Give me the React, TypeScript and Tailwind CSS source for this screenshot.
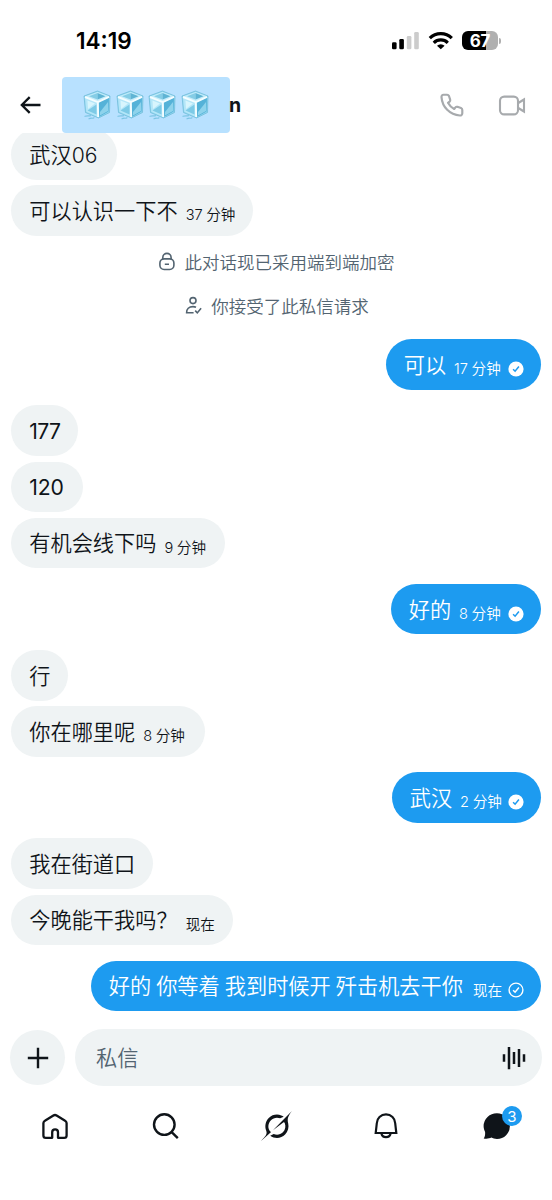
import { ReactNode } from "react";
import clsx from "clsx";

type Status = "sent" | "sending";

interface MessageProps {
  text: string;
  time?: string;
  status?: Status;
  className?: string;
}

function IceCube() {
  return (
    <svg className="h-[31px] w-[28px]" viewBox="0 0 28 31" fill="none" aria-hidden="true">
      <path d="M1 6 L14.5 1 L27 6 L26.5 22.5 L15.5 28 L2.5 22.5 Z" fill="#8fd5ef" stroke="#6bb9d6" strokeWidth=".7" strokeLinejoin="round" />
      <path d="M2 6.5 L14.5 2 L26 6.3 L14.5 11.5 Z" fill="#c4ecfa" />
      <path d="M6 6.2 L14.5 3 L14.5 9.6 Z" fill="#85cde6" />
      <path d="M14.5 3 L22.5 6.3 L14.5 9.6 Z" fill="#5fb4d4" />
      <path d="M2 7.5 L14.5 12 L15 27 L3.3 21.8 Z" fill="#b4e6f8" />
      <path d="M4.5 10.5 L12 13.5 L5 19 Z" fill="#d8f5fd" />
      <path d="M4.5 20.5 L13.5 14.5 V24.5 Z" fill="#7dcae6" />
      <path d="M16 12 L26 7.5 L25.5 21.5 L16 27 Z" fill="#55b2d8" />
      <path d="M17 22 L25 12 V21 L17 25.5 Z" fill="#8ed3ec" />
      <path d="M2 7 L14.8 12.2 L26 6.9 M14.8 12.2 L15.2 27" stroke="#f4fdff" strokeWidth="1.9" strokeLinejoin="round" />
      <path d="M2 26.3 C4 25.4 6 26.2 7.5 25.6 M6 28.8 C8 27.6 9.5 28.8 11 27.8" stroke="#7cc5e4" strokeWidth="1.2" strokeLinecap="round" />
    </svg>
  );
}

function StatusBar() {
  return (
    <div className="flex h-[77px] shrink-0 items-start justify-between pl-[76px] pr-[51px]">
      <span className="mt-[25px] font-['Inter'] text-[22.6px] font-semibold leading-8 text-black">14:19</span>
      <div className="mt-[31px] flex items-start">
        <svg className="h-[19px] w-[28px]" viewBox="0 0 28 19" aria-hidden="true">
          <rect x="0" y="11.3" width="4.6" height="6.9" rx="1.3" fill="#000" />
          <rect x="7.3" y="8" width="4.6" height="10.2" rx="1.3" fill="#000" />
          <rect x="14.8" y="5" width="4.6" height="13.2" rx="1.3" fill="#ccc" />
          <rect x="22.2" y="1" width="4.6" height="17.2" rx="1.3" fill="#ccc" />
        </svg>
        <svg className="ml-[8px] h-[19px] w-[26px]" viewBox="0 0 26 19" fill="none" stroke="#000" strokeWidth="3.2" aria-hidden="true">
          <path d="M1.8 7.2 A15.6 15.6 0 0 1 23.8 7.2" />
          <path d="M5.8 11.8 A10 10 0 0 1 19.8 11.8" />
          <path d="M12.8 18.3 L9 14.8 A5.4 5.4 0 0 1 16.6 14.8 Z" fill="#000" stroke="none" />
        </svg>
        <div className="ml-[8px] flex items-center">
          <div className="flex h-[19px] w-[36px] items-center justify-center rounded-[6px] bg-[linear-gradient(90deg,#000_67%,#b0b0b0_67%)] pt-px font-['Inter'] text-[17px] font-bold leading-none tracking-[-0.3px] text-white">
            67
          </div>
          <div className="ml-px h-[6px] w-[2px] rounded-r-full bg-[#b0b0b0]" />
        </div>
      </div>
    </div>
  );
}

function Header() {
  return (
    <header className="flex h-14 shrink-0 items-center pr-[26px]">
      <svg className="ml-[16px] h-[28px] w-[28px]" viewBox="0 0 24 24" fill="#0f1419" aria-hidden="true">
        <path d="M7.414 13l5.043 5.04-1.414 1.42L3.586 12l7.457-7.46 1.414 1.42L7.414 11H21v2H7.414z" />
      </svg>
      <div className="ml-[18px] flex h-[56px] w-[168px] items-center justify-center gap-[4.7px] rounded-[4px] bg-[#b8e1ff]">
        <IceCube />
        <IceCube />
        <IceCube />
        <IceCube />
      </div>
      <span className="-ml-px mt-px font-['Inter'] text-[19.5px] font-bold text-[#0f1419]">n</span>
      <svg className="ml-auto h-[26px] w-[26px]" viewBox="0 0 24 24" fill="none" stroke="#a7aaad" strokeWidth="2" strokeLinejoin="round" aria-hidden="true">
        <path d="M7.5 2.5 H4.2 C3 2.5 2.2 3.5 2.3 4.7 C3 14 10 21 19.3 21.7 c1.2 .1 2.2-.8 2.2-2 v-3.2 c0-.8-.5-1.4-1.2-1.7 l-3.3-1.1 c-.7-.2-1.4 0-1.8.5 l-1.2 1.5 C11.5 14.4 9.6 12.5 8.3 10 L9.8 8.8 c.5-.4.7-1.1.5-1.8 L9.2 3.7 C8.9 3 8.3 2.5 7.5 2.5z" />
      </svg>
      <svg className="ml-[33px] h-[23px] w-[28px]" viewBox="0 0 28 23" fill="none" stroke="#a7aaad" strokeWidth="2.1" aria-hidden="true">
        <rect x="2" y="2.6" width="18" height="17.8" rx="4.2" />
        <path d="M20.3 9 L26 5.5 V17.5 L20.3 14" />
      </svg>
    </header>
  );
}

function Check({ status }: { status: Status }) {
  return (
    <svg className="mt-[9px] mr-[16.5px] ml-auto h-4 w-4 shrink-0" viewBox="0 0 16 16" fill="none" aria-hidden="true">
      {status === "sent" ? (
        <circle cx="8" cy="8" r="7.6" fill="#fff" />
      ) : (
        <circle cx="8" cy="8" r="6.9" stroke="#fff" strokeWidth="1.4" />
      )}
      <path d="M5.1 8.2 L7.1 10.2 L10.9 5.6" stroke={status === "sent" ? "#1d9bf0" : "#fff"} strokeWidth="1.5" />
    </svg>
  );
}

function Message({ text, time, status, className }: MessageProps) {
  return (
    <div
      className={clsx(
        "flex h-[50.6px] shrink-0 items-center whitespace-pre rounded-full pl-[18px]",
        status ? "self-end bg-[#1d9bf0] text-white" : "self-start bg-[#eff3f4] text-[#0f1419]",
        /^\d+$/.test(text) ? "font-normal" : "font-[350]",
        className
      )}
    >
      <span className="mt-[2px] text-[21.2px] leading-none [word-spacing:-0.9px]">{text}</span>
      {time && (
        <span className={clsx("mt-[10px] text-[14.6px] leading-none [word-spacing:-0.5px]", status === "sending" ? "ml-[10px]" : "ml-[8px]")}>
          {time}
        </span>
      )}
      {status && <Check status={status} />}
    </div>
  );
}

function Notice({ icon, children }: { icon: ReactNode; children: ReactNode }) {
  return (
    <div className="flex h-11 shrink-0 items-center justify-center gap-[9px] text-[17.5px] font-[350] text-[#536471]">
      {icon}
      <span className="mt-[2px]">{children}</span>
    </div>
  );
}

function Composer() {
  return (
    <div className="flex h-[57px] shrink-0 items-center gap-[10px] pl-[10px] pr-[10px]">
      <button type="button" className="flex h-[55px] w-[55px] items-center justify-center rounded-full bg-[#eff3f4]">
        <svg className="h-[22px] w-[22px]" viewBox="0 0 22 22" stroke="#0f1419" strokeWidth="2.4" aria-hidden="true">
          <path d="M11 .8 V21.2 M.8 11 H21.2" />
        </svg>
      </button>
      <div className="flex h-[57px] flex-1 items-center justify-between rounded-full bg-[#eff3f4] pl-[21px] pr-[15px]">
        <span className="mt-[2px] text-[21.2px] font-[350] text-[#536471]">私信</span>
        <svg className="h-[24px] w-[25px]" viewBox="0 0 25 24" stroke="#0f1419" strokeWidth="2.5" aria-hidden="true">
          <path d="M2 8.3 V15.7 M7 1 V23.3 M12 6 V18 M17 3 V21 M22 8.3 V15.7" />
        </svg>
      </div>
    </div>
  );
}

function BottomNav() {
  return (
    <nav className="flex h-[80px] shrink-0 items-center text-[#0f1419]">
      <div className="flex flex-1 justify-center">
        <svg className="h-[30px] w-[30px]" viewBox="0 0 30 30" fill="none" stroke="currentColor" strokeWidth="2.3" strokeLinejoin="round">
          <path d="M12.2 26.8 V21.3 a2.9 2.9 0 0 1 5.8 0 V26.8 H24.2 a2.4 2.4 0 0 0 2.4-2.4 V12.2 a3 3 0 0 0-1.5-2.4 L16.6 4.5 a3 3 0 0 0-3.2 0 L4.9 9.8 A3 3 0 0 0 3.4 12.2 V24.4 a2.4 2.4 0 0 0 2.4 2.4z" />
        </svg>
      </div>
      <div className="flex flex-1 justify-center">
        <svg className="h-[30px] w-[30px]" viewBox="0 0 30 30" fill="none" stroke="currentColor" strokeWidth="2.4">
          <circle cx="13.3" cy="13.6" r="10.3" />
          <path d="M20.4 20.8 L26.8 27.2" />
        </svg>
      </div>
      <div className="flex flex-1 justify-center">
        <svg className="h-[30px] w-[31px]" viewBox="0 0 33 32" fill="currentColor">
          <path d="M12.745 20.54l10.97-8.19c.539-.4 1.307-.244 1.564.38 1.349 3.288.746 7.241-1.938 9.955-2.683 2.714-6.417 3.31-9.83 1.954l-3.728 1.745c5.347 3.697 11.84 2.782 15.898-1.324 3.219-3.255 4.216-7.692 3.284-11.693l.008.009c-1.351-5.878.332-8.227 3.782-13.031L33 0l-4.54 4.59v-.014L12.743 20.544m-2.263 1.987c-3.837-3.707-3.175-9.446.1-12.755 2.42-2.449 6.388-3.448 9.852-1.979l3.72-1.737c-.67-.49-1.53-1.017-2.515-1.387-4.455-1.854-9.789-.931-13.41 2.728-3.483 3.523-4.579 8.94-2.697 13.561 1.405 3.454-.899 5.898-3.22 8.364C1.49 30.2.666 31.074 0 32l10.478-9.466" />
        </svg>
      </div>
      <div className="flex flex-1 justify-center">
        <svg className="h-[30px] w-[30px]" viewBox="0 0 30 30" fill="none" stroke="currentColor" strokeWidth="2.2">
          <path d="M4.7 22 L5.8 12.3 A9.2 8.9 0 0 1 24.2 12.3 L25.3 22 Z" />
          <path d="M10.4 22.5 A4.7 4.6 0 0 0 19.6 22.5" />
        </svg>
      </div>
      <div className="flex flex-1 justify-center">
        <div className="relative">
          <svg className="h-[30px] w-[30px]" viewBox="0 0 30 30" fill="currentColor">
            <path d="M15 2.2 A12.9 12.9 0 0 1 15 28 C12.6 28 10.9 27.4 9.4 26.6 C7.4 27.5 4.6 28 1.7 27.4 C2.9 25.8 3.3 23.9 3.1 20.9 C2.2 19.2 1.6 17.3 1.6 15.1 A13.2 12.9 0 0 1 15 2.2z" />
          </svg>
          <span className="absolute -top-[5px] left-[20px] flex h-[20px] w-[20px] items-center justify-center rounded-full bg-[#1d9bf0] font-['Inter'] text-[15px] leading-none text-white">
            3
          </span>
        </div>
      </div>
    </nav>
  );
}

function App() {
  return (
    <div className="flex h-[1200px] w-[552px] flex-col overflow-hidden bg-white font-['Inter','Noto_Sans_CJK_SC',sans-serif]">
      <StatusBar />
      <Header />
      <main className="flex h-[896px] shrink-0 flex-col overflow-hidden px-[11.3px]">
        <Message text="武汉06" className="-mt-[3.8px] w-[105.5px]" />
        <Message text="可以认识一下不" time="37 分钟" className="mt-[5.6px] w-[242px]" />
        <div className="mt-[4px] mb-[11.3px]">
          <Notice
            icon={
              <svg className="h-[19px] w-[18px]" viewBox="0 0 18 19" fill="none" stroke="currentColor" strokeWidth="1.6">
                <rect x="1.9" y="6.9" width="14" height="10.6" rx="4.2" />
                <path d="M4.8 7.2 V5.5 a4.1 4.1 0 0 1 8.3 0 V7.2 M6.8 12.2 H11" />
              </svg>
            }
          >
            此对话现已采用端到端加密
          </Notice>
          <Notice
            icon={
              <svg className="ml-[2px] h-[19px] w-[17px]" viewBox="0 0 17 19" fill="none" stroke="currentColor" strokeWidth="1.6">
                <circle cx="8" cy="4.6" r="3" />
                <path d="M8.6 16.8 H1.6 C1.4 13 4 10.6 8 10.6 c1.2 0 2.2.2 3 .6" />
                <path d="M10.2 14.6 l2.1 2.3 3.8-4.6" />
              </svg>
            }
          >
            你接受了此私信请求
          </Notice>
        </div>
        <Message text="可以" time="17 分钟" status="sent" className="w-[155px]" />
        <Message text="177" className="mt-[15.5px] w-[66.5px] tracking-[-0.7px]" />
        <Message text="120" className="mt-[5.6px] w-[71.5px] tracking-[-0.2px]" />
        <Message text="有机会线下吗" time="9 分钟" className="mt-[5.6px] w-[213.5px]" />
        <Message text="好的" time="8 分钟" status="sent" className="mt-[15.5px] w-[150px]" />
        <Message text="行" className="mt-[15.5px] w-[56.5px]" />
        <Message text="你在哪里呢" time="8 分钟" className="mt-[5.6px] w-[193.5px]" />
        <Message text="武汉" time="2 分钟" status="sent" className="mt-[15.5px] w-[149px]" />
        <Message text="我在街道口" className="mt-[15.5px] w-[142px]" />
        <Message text="今晚能干我吗？" time="现在" className="mt-[5.6px] w-[222px]" />
        <Message text="好的 你等着 我到时候开 歼击机去干你" time="现在" status="sending" className="mt-[15.5px] w-[450px]" />
      </main>
      <Composer />
      <BottomNav />
    </div>
  );
}

export default App;
